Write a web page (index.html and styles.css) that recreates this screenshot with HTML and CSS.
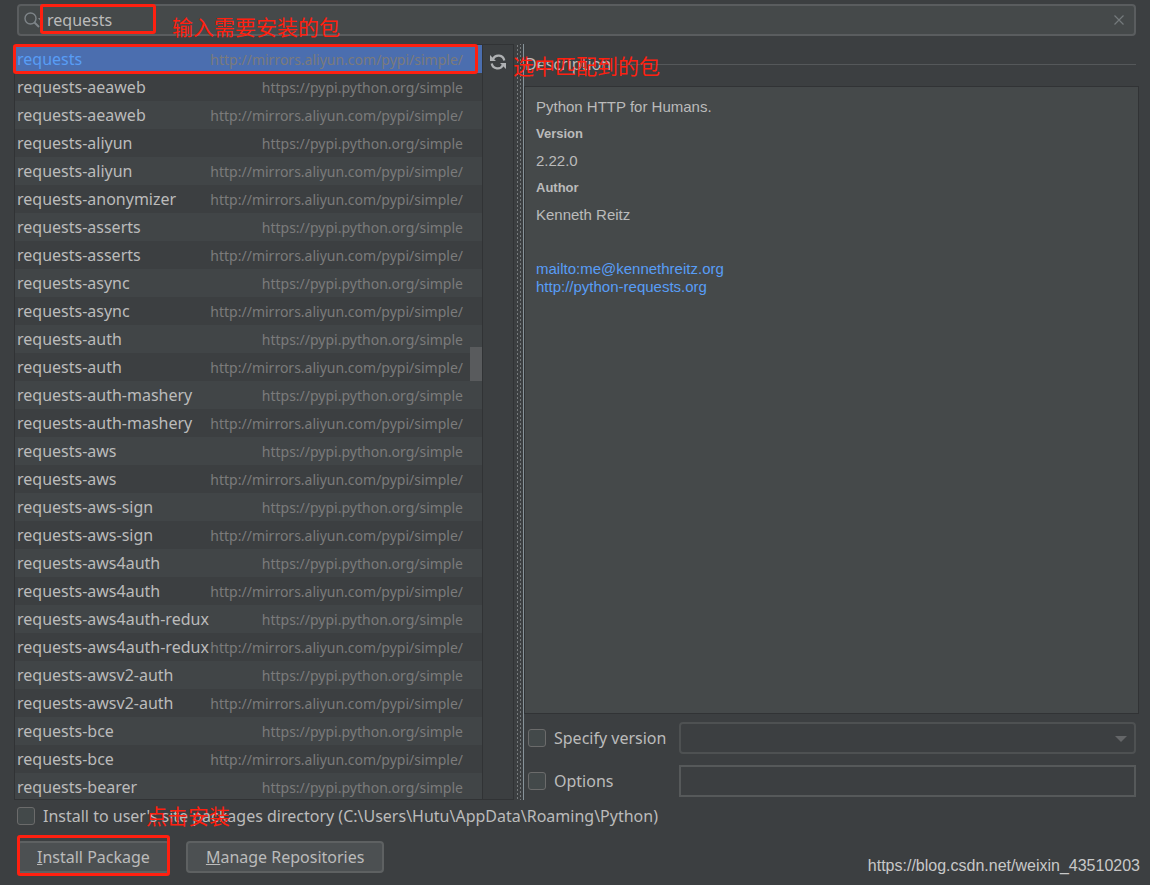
FILE: index.html
```
<!DOCTYPE html>
<html lang="en">
<head>
<meta charset="utf-8">
<title>Available Packages</title>
<link rel="stylesheet" href="styles.css">
</head>
<body>
<div class="dialog">
  <div class="search">
    <svg class="search-icon" width="20" height="18" viewBox="0 0 20 18" aria-hidden="true">
      <circle cx="7.5" cy="7.5" r="5.5" fill="none" stroke="#7e8488" stroke-width="1.4"/>
      <path d="M11.5 11.5L16 16" stroke="#7e8488" stroke-width="2"/>
      <path d="M15 7h5l-2.500 3z" fill="#7e8488"/>
    </svg>
    <input class="search-input" type="text" value="requests" aria-label="Search packages">
    <button class="clear" type="button" aria-label="Clear search">
      <svg width="10" height="10" viewBox="0 0 10 10"><path d="M.5.5l9 9M9.500.5l-9 9" stroke="#74797c" stroke-width="1.2"/></svg>
    </button>
    <span class="frame frame-search"></span>
    <span class="note note-search" lang="zh">输入需要安装的包</span>
  </div>

  <main class="main">
    <div class="packages">
      <ul class="list" role="listbox" aria-label="Packages">
        <li class="row selected" role="option" aria-selected="true"><span>requests</span><span class="repo">http://mirrors.aliyun.com/pypi/simple/</span></li>
        <li class="row" role="option"><span>requests-aeaweb</span><span class="repo">https://pypi.python.org/simple</span></li>
        <li class="row" role="option"><span>requests-aeaweb</span><span class="repo">http://mirrors.aliyun.com/pypi/simple/</span></li>
        <li class="row" role="option"><span>requests-aliyun</span><span class="repo">https://pypi.python.org/simple</span></li>
        <li class="row" role="option"><span>requests-aliyun</span><span class="repo">http://mirrors.aliyun.com/pypi/simple/</span></li>
        <li class="row" role="option"><span>requests-anonymizer</span><span class="repo">http://mirrors.aliyun.com/pypi/simple/</span></li>
        <li class="row" role="option"><span>requests-asserts</span><span class="repo">https://pypi.python.org/simple</span></li>
        <li class="row" role="option"><span>requests-asserts</span><span class="repo">http://mirrors.aliyun.com/pypi/simple/</span></li>
        <li class="row" role="option"><span>requests-async</span><span class="repo">https://pypi.python.org/simple</span></li>
        <li class="row" role="option"><span>requests-async</span><span class="repo">http://mirrors.aliyun.com/pypi/simple/</span></li>
        <li class="row" role="option"><span>requests-auth</span><span class="repo">https://pypi.python.org/simple</span></li>
        <li class="row" role="option"><span>requests-auth</span><span class="repo">http://mirrors.aliyun.com/pypi/simple/</span></li>
        <li class="row" role="option"><span>requests-auth-mashery</span><span class="repo">https://pypi.python.org/simple</span></li>
        <li class="row" role="option"><span>requests-auth-mashery</span><span class="repo">http://mirrors.aliyun.com/pypi/simple/</span></li>
        <li class="row" role="option"><span>requests-aws</span><span class="repo">https://pypi.python.org/simple</span></li>
        <li class="row" role="option"><span>requests-aws</span><span class="repo">http://mirrors.aliyun.com/pypi/simple/</span></li>
        <li class="row" role="option"><span>requests-aws-sign</span><span class="repo">https://pypi.python.org/simple</span></li>
        <li class="row" role="option"><span>requests-aws-sign</span><span class="repo">http://mirrors.aliyun.com/pypi/simple/</span></li>
        <li class="row" role="option"><span>requests-aws4auth</span><span class="repo">https://pypi.python.org/simple</span></li>
        <li class="row" role="option"><span>requests-aws4auth</span><span class="repo">http://mirrors.aliyun.com/pypi/simple/</span></li>
        <li class="row" role="option"><span>requests-aws4auth-redux</span><span class="repo">https://pypi.python.org/simple</span></li>
        <li class="row" role="option"><span>requests-aws4auth-redux</span><span class="repo">http://mirrors.aliyun.com/pypi/simple/</span></li>
        <li class="row" role="option"><span>requests-awsv2-auth</span><span class="repo">https://pypi.python.org/simple</span></li>
        <li class="row" role="option"><span>requests-awsv2-auth</span><span class="repo">http://mirrors.aliyun.com/pypi/simple/</span></li>
        <li class="row" role="option"><span>requests-bce</span><span class="repo">https://pypi.python.org/simple</span></li>
        <li class="row" role="option"><span>requests-bce</span><span class="repo">http://mirrors.aliyun.com/pypi/simple/</span></li>
        <li class="row" role="option"><span>requests-bearer</span><span class="repo">https://pypi.python.org/simple</span></li>
      </ul>
      <span class="scroll-thumb"></span>
      <span class="frame frame-row"></span>
    </div>
    <div class="toolbar">
      <button class="reload" type="button" aria-label="Reload list of packages">
        <svg width="16" height="16" viewBox="0 0 16 16">
          <path d="M3 5A6 6 0 0 1 14.300 6.500M13 11A6 6 0 0 1 1.700 9.500" fill="none" stroke="#afb1b3" stroke-width="2.200"/>
          <path d="M0 1v6h6zM16 15V9h-6z" fill="#afb1b3"/>
        </svg>
      </button>
    </div>
    <div class="splitter"></div>
    <section class="details">
      <h2 class="legend"><span>Description</span></h2>
      <span class="note note-match" lang="zh">选中匹配到的包</span>
      <div class="description">
        <p>Python HTTP for Humans.</p>
        <h3>Version</h3>
        <p>2.22.0</p>
        <h3>Author</h3>
        <p>Kenneth Reitz</p>
        <div class="links">
          <a href="mailto:me@kennethreitz.org">mailto:me@kennethreitz.org</a>
          <a href="http://python-requests.org">http://python-requests.org</a>
        </div>
      </div>
      <div class="settings">
        <label class="check"><input type="checkbox">Specify version</label>
        <div class="combo">
          <select class="field" aria-label="Version" disabled><option></option></select>
          <svg class="arrow" width="12" height="6" viewBox="0 0 12 6" aria-hidden="true"><path d="M0 0h12L6 6z" fill="#646668"/></svg>
        </div>
        <label class="check"><input type="checkbox">Options</label>
        <input class="field" type="text" aria-label="Options value" disabled>
      </div>
    </section>
  </main>

  <footer class="footer">
    <label class="check user-site"><input type="checkbox">Install to user's site packages directory (C:\Users\Hutu\AppData\Roaming\Python)</label>
    <span class="note note-install" lang="zh">点击安装</span>
    <div class="actions">
      <button class="button" type="button"><u>I</u>nstall Package<span class="frame frame-install"></span></button>
      <button class="button" type="button"><u>M</u>anage Repositories</button>
      <span class="watermark">https://blog.csdn.net/weixin_43510203</span>
    </div>
  </footer>
</div>
</body>
</html>
```
FILE: styles.css
```
* { box-sizing: border-box; }

body {
  margin: 0;
  background: #3c3f41;
  color: #bbbbbb;
  font: 16px/28px "Noto Sans", "Noto Sans CJK SC", sans-serif;
}

button, input, select { font: inherit; color: inherit; }

.dialog {
  display: flex;
  flex-direction: column;
  height: 100vh;
  padding: 4px 10px 12px 14px;
}

.search {
  position: relative;
  display: flex;
  align-items: center;
  height: 32px;
  margin: 0 4px 8px 3px;
  padding: 0 10px 0 4px;
  border: 2px solid #5a5d5f;
  border-radius: 4px;
  background: #45494a;
}

.search-icon { flex: none; }

.search-input {
  flex: 1;
  min-width: 0;
  height: 28px;
  padding: 0 4px;
  border: 0;
  outline: 0;
  background: none;
}

.clear, .reload {
  display: flex;
  padding: 0;
  border: 0;
  background: none;
}

.main {
  display: flex;
  flex: 1;
  min-height: 0;
}

.packages {
  position: relative;
  flex: 0 1 469px;
  min-width: 0;
  border: 1px solid #313335;
}

.list {
  height: 100%;
  margin: 0;
  padding: 0;
  overflow: hidden;
  list-style: none;
}

.row {
  display: flex;
  position: relative;
  height: 28px;
  padding-left: 2px;
  white-space: nowrap;
  background: #414547;
}

.row:nth-child(even) { background: #3c3f41; }
.row.selected { background: #4b6eaf; color: #589df6; }

.repo {
  position: absolute;
  top: 1px;
  right: 19px;
  color: #7b7b7b;
  font-size: 14px;
}

.scroll-thumb {
  position: absolute;
  top: 40%;
  right: 0;
  width: 12px;
  height: 34px;
  background: #595b5d;
}

.toolbar {
  display: flex;
  justify-content: center;
  flex: none;
  width: 31px;
  padding-top: 9px;
  border: 1px solid #313335;
  border-left: 0;
}

.reload { height: 16px; }

.splitter {
  flex: none;
  width: 10px;
  border-right: 1px solid #87939a;
  background-image:
    radial-gradient(circle, #777b7d 1px, transparent 1px),
    radial-gradient(circle, #777b7d 1px, transparent 1px);
  background-size: 3px 4px;
  background-repeat: repeat-y;
  background-position: 2px 0, 5px 2px;
}

.details {
  position: relative;
  display: flex;
  flex-direction: column;
  flex: 1;
  min-width: 0;
}

.legend {
  display: flex;
  align-items: center;
  gap: 6px;
  height: 40px;
  margin: 0 4px 2px 1px;
  font-size: 16px;
  font-weight: 400;
}

.legend::after {
  content: "";
  flex: 1;
  height: 1px;
  background: #55585a;
}

.description {
  flex: 1;
  min-height: 0;
  margin-right: 1px;
  padding: 11px;
  border: 1px solid #313335;
  background: #45494a;
  font: 15px/18px "Liberation Sans", Arial, sans-serif;
}

.description p, .description h3 { margin: 0 0 9px; }
.description h3 { font-size: 13px; line-height: 18px; }

.links {
  display: flex;
  flex-direction: column;
  align-items: flex-start;
  margin-top: 36px;
}

.links a { color: #589df6; text-decoration: none; }

.settings {
  display: grid;
  grid-template-columns: 143px 1fr;
  gap: 11px 8px;
  padding: 8px 4px 3px;
}

.check {
  display: flex;
  align-items: center;
  gap: 8px;
  white-space: nowrap;
}

.check input {
  appearance: none;
  flex: none;
  width: 18px;
  height: 18px;
  margin: 0;
  border: 1px solid #6b6b6b;
  border-radius: 3px;
  background: #43494a;
}

.combo { position: relative; }

.field {
  display: block;
  appearance: none;
  width: 100%;
  height: 32px;
  padding: 0 6px;
  border: 2px solid #56595a;
  background: #3c3f41;
}

.combo .field { border-radius: 4px; }

.arrow {
  position: absolute;
  top: 14px;
  right: 9px;
}

.footer {
  position: relative;
  padding-left: 3px;
}

.user-site { height: 32px; }

.actions {
  display: flex;
  align-items: center;
  gap: 16px;
  height: 32px;
  margin-top: 9px;
}

.button {
  position: relative;
  height: 32px;
  padding: 0 18px;
  border: 2px solid #5e6162;
  border-radius: 4px;
  background: #4c5052;
  line-height: 26px;
  white-space: nowrap;
}

.watermark {
  margin-left: auto;
  padding-top: 18px;
  color: #c8c8c8;
  font: 16px/18px "Liberation Sans", Arial, sans-serif;
}

/* Red annotations drawn over the dialog */
.frame {
  position: absolute;
  border: 3px solid #ff2010;
  border-radius: 3px;
  pointer-events: none;
}

.frame-search { top: -2px; left: 21px; width: 116px; height: 30px; }
.frame-row { top: -1px; left: -2px; right: 4px; height: 30px; }
.frame-install { inset: -8px -2px -5px; }

.note {
  position: absolute;
  color: #ff2010;
  font: 21px/28px "Noto Sans CJK SC", sans-serif;
  white-space: nowrap;
}

.note-search { top: 6px; left: 153px; }
.note-match { top: 7px; left: -11px; }
.note-install { top: 1px; left: 132px; }
```
